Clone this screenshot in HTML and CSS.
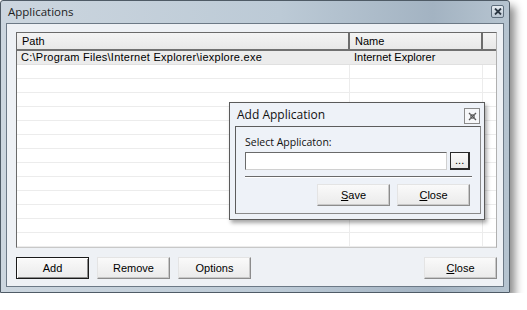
FILE: index.html
```html
<!DOCTYPE html>
<html lang="en">
<head>
<meta charset="UTF-8">
<title>Applications</title>
<link rel="stylesheet" href="styles.css">
</head>
<body>

<div class="window">
    <div class="titlebar">
        <span class="title">Applications</span>
        <span class="caption-close">
            <svg width="8" height="7" viewBox="0 0 8 7"><path d="M1 0.5 L7 6.5 M7 0.5 L1 6.5" stroke="#2c3844" stroke-width="1.8"/></svg>
        </span>
    </div>

    <div class="client">
        <div class="listview">
            <div class="lv-header">
                <div class="hcol col-path">Path</div>
                <div class="hcol col-name">Name</div>
                <div class="hcol col-fill"></div>
            </div>
            <div class="lv-body">
                <div class="lv-row selected"><div class="cell col-path path-text">C:\Program Files\Internet Explorer\iexplore.exe</div><div class="cell col-name">Internet Explorer</div></div>
                <div class="lv-row"><div class="cell col-path"></div><div class="cell col-name"></div></div>
                <div class="lv-row"><div class="cell col-path"></div><div class="cell col-name"></div></div>
                <div class="lv-row"><div class="cell col-path"></div><div class="cell col-name"></div></div>
                <div class="lv-row"><div class="cell col-path"></div><div class="cell col-name"></div></div>
                <div class="lv-row"><div class="cell col-path"></div><div class="cell col-name"></div></div>
                <div class="lv-row"><div class="cell col-path"></div><div class="cell col-name"></div></div>
                <div class="lv-row"><div class="cell col-path"></div><div class="cell col-name"></div></div>
                <div class="lv-row"><div class="cell col-path"></div><div class="cell col-name"></div></div>
                <div class="lv-row"><div class="cell col-path"></div><div class="cell col-name"></div></div>
                <div class="lv-row"><div class="cell col-path"></div><div class="cell col-name"></div></div>
                <div class="lv-row"><div class="cell col-path"></div><div class="cell col-name"></div></div>
                <div class="lv-row"><div class="cell col-path"></div><div class="cell col-name"></div></div>
                <div class="lv-row"><div class="cell col-path"></div><div class="cell col-name"></div></div>
                <div class="lv-row"><div class="cell col-path"></div><div class="cell col-name"></div></div>
            </div>
        </div>

        <div class="buttonbar">
            <button class="btn default">Add</button>
            <button class="btn">Remove</button>
            <button class="btn">Options</button>
            <span class="spacer"></span>
            <button class="btn"><u>C</u>lose</button>
        </div>
    </div>

    <!-- modal dialog sits over the list -->
    <div class="dialog">
        <div class="dlg-titlebar">
            <span class="dlg-title">Add Application</span>
            <span class="dlg-close">
                <svg width="9" height="9" viewBox="0 0 9 9"><path d="M1 1 L8 8 M8 1 L1 8" stroke="#555" stroke-width="1.3"/><rect x="2.5" y="2.5" width="4" height="4" fill="none" stroke="#777" stroke-width="0.8"/></svg>
            </span>
        </div>
        <div class="dlg-panel">
            <label class="dlg-label" for="appPath">Select Applicaton:</label>
            <div class="path-row">
                <input type="text" id="appPath" class="path-input">
                <button class="browse-btn">...</button>
            </div>
            <div class="separator"></div>
            <div class="dlg-buttons">
                <button class="btn"><u>S</u>ave</button>
                <button class="btn"><u>C</u>lose</button>
            </div>
        </div>
    </div>
</div>

</body>
</html>
```

FILE: styles.css
```css
body {
    margin: 0;
    background-color: #fff;
    font-family: "Liberation Sans", Arial, sans-serif;
    font-size: 11px;
    color: #000;
}
.window {
    position: relative;
    width: 510px;
    height: 293px;
    box-sizing: border-box;
    border: 1px solid #4f5b66;
    border-radius: 3px 3px 0 0;
    background: linear-gradient(to right, #ccd6df, #bccad6 55%, #a3b3c2 85%, #b6c4d0);
    padding: 0 5px 5px 5px;
    display: flex;
    flex-direction: column;
    box-shadow: 5px 6px 9px rgba(0, 0, 0, 0.45);
}
.titlebar {
    height: 23px;
    display: flex;
    align-items: center;
    justify-content: space-between;
}
.title {
    font-family: "Open Sans", sans-serif;
    font-size: 11.5px;
    color: #1e1e1e;
    padding-left: 2px;
    margin-top: -2px;
}
.caption-close {
    width: 11px;
    height: 11px;
    border: 1px solid #5d6d7c;
    border-radius: 2px;
    background: linear-gradient(#e6ecf2, #b9c6d2);
    display: flex;
    align-items: center;
    justify-content: center;
    margin-top: -2px;
}
.client {
    flex: 1;
    border: 1px solid #6c7986;
    background-color: #eef1f5;
    padding: 8px 6px 7px 9px;
    display: flex;
    flex-direction: column;
}
.listview {
    height: 216px;
    box-sizing: border-box;
    border: 1px solid #6a6a6a;
    border-right-color: #b0b0b0;
    border-bottom-color: #c8c8c8;
    background-color: #fff;
    overflow: hidden;
}
.lv-header {
    display: flex;
    height: 18px;
    box-sizing: border-box;
    border-bottom: 2px solid #707070;
    background: linear-gradient(#f4f4f4, #e8e8e8);
}
.hcol {
    box-sizing: border-box;
    padding-left: 5px;
    line-height: 16px;
    border-right: 2px solid #6d6d6d;
}
.col-path {
    width: 333px;
    flex: none;
}
.col-name {
    width: 133px;
    flex: none;
}
.col-fill {
    flex: 1;
    border-right: none;
}
.lv-row {
    display: flex;
    height: 14px;
    box-sizing: border-box;
    border-bottom: 1px solid #ececec;
}
.lv-row.selected {
    background-color: #ececec;
    border-bottom-color: #e0e0e0;
}
.cell {
    box-sizing: border-box;
    padding-left: 4px;
    line-height: 13px;
    border-right: 1px solid #ececec;
    white-space: nowrap;
}
.path-text {
    letter-spacing: 0.25px;
}
.buttonbar {
    display: flex;
    gap: 8px;
    margin-top: 9px;
}
.spacer {
    flex: 1;
}
.btn {
    width: 73px;
    height: 22px;
    box-sizing: border-box;
    padding: 0;
    font-family: "Liberation Sans", Arial, sans-serif;
    font-size: 11px;
    color: #000;
    border: 1px solid;
    border-color: #e4e4e4 #8c8c8c #8c8c8c #e4e4e4;
    background: linear-gradient(#fafafa, #eaeaea);
    box-shadow: inset -1px -1px 0 #c8c8c8;
}
.btn.default {
    border: 1px solid #1a1a1a;
    box-shadow: inset 1px 1px 0 #fff, inset -1px -1px 0 #8c8c8c;
}
.dialog {
    position: absolute;
    left: 228px;
    top: 101px;
    width: 256px;
    height: 118px;
    box-sizing: border-box;
    border: 1px solid #5a5a5a;
    background-color: #eef2f8;
    padding: 0 3px 5px 5px;
    display: flex;
    flex-direction: column;
    box-shadow: 2px 3px 4px rgba(0, 0, 0, 0.35);
}
.dlg-titlebar {
    height: 23px;
    display: flex;
    align-items: center;
    justify-content: space-between;
}
.dlg-title {
    font-family: "Open Sans", sans-serif;
    font-size: 12px;
    color: #111;
    padding-left: 2px;
}
.dlg-close {
    width: 14px;
    height: 14px;
    border: 1px solid #8a8a8a;
    background-color: #f6f7f9;
    display: flex;
    align-items: center;
    justify-content: center;
    margin-right: 1px;
    margin-top: 3px;
}
.dlg-panel {
    flex: 1;
    border: 1px solid #5c5c5c;
    border-right-color: #8a8a8a;
    border-bottom-color: #8a8a8a;
    padding: 7px 10px 0 9px;
    display: flex;
    flex-direction: column;
}
.dlg-label {
    font-family: "Open Sans", sans-serif;
    font-size: 10.5px;
    line-height: 16px;
    height: 18px;
    color: #111;
}
.path-row {
    display: flex;
    gap: 3px;
}
.path-input {
    width: 205px;
    height: 18px;
    box-sizing: border-box;
    margin: 0;
    border: 1px solid;
    border-color: #6a6a6a #d0d0d0 #d0d0d0 #6a6a6a;
    background-color: #fff;
    outline: none;
}
.browse-btn {
    width: 20px;
    height: 18px;
    box-sizing: border-box;
    padding: 0 0 3px;
    font-family: "Liberation Sans", Arial, sans-serif;
    font-size: 11px;
    line-height: 9px;
    border: 2px solid #2a2a2a;
    border-left-width: 1px;
    border-top-width: 1px;
    background: linear-gradient(#fafafa, #e8e8e8);
    display: flex;
    align-items: flex-end;
    justify-content: center;
}
.separator {
    height: 0;
    margin: 6px 0 0;
    width: 227px;
    border-top: 1px solid #6a6a6a;
    border-bottom: 1px solid #fff;
}
.dlg-buttons {
    display: flex;
    justify-content: flex-end;
    gap: 7px;
    margin-top: 6px;
}
```
